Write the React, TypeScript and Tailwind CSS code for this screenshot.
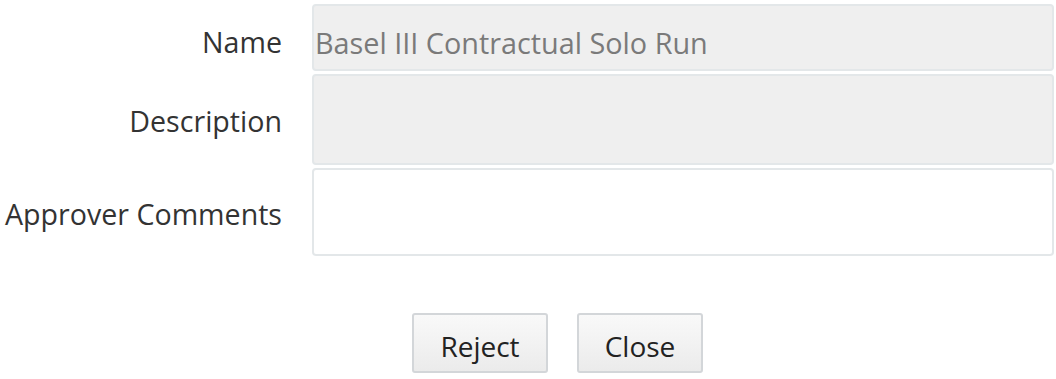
export default function App() {
  const font = { fontFamily: '"Open Sans", "Noto Sans", sans-serif' };
  return (
    <div className="w-[1056px] h-[379px] bg-white overflow-hidden" style={font}>
      <div className="grid grid-cols-[282px_742px] gap-x-[30px] gap-y-[3px] pt-[4px]">
        <div className="flex items-center justify-end text-[28.6px] text-[#333] h-[67px] pt-[10px]">Name</div>
        <div className="h-[67px] rounded-[4px] border-2 border-[#e3e7e9] bg-[#efefef] flex items-center pl-[1px] pt-[10px] text-[28.8px] text-[#7a7a7a]">
          Basel III Contractual Solo Run
        </div>
        <div className="flex items-center justify-end text-[28.6px] text-[#333] h-[91px] pt-[4px]">Description</div>
        <div className="h-[91px] rounded-[4px] border-2 border-[#e3e7e9] bg-[#efefef]"></div>
        <div className="flex items-center justify-end text-[28.6px] text-[#333] h-[88px] pt-[5px]">Approver Comments</div>
        <div className="h-[88px] rounded-[4px] border-2 border-[#e3e7e9] bg-white"></div>
      </div>
      <div className="flex gap-[29px] pl-[412px] pt-[57px]">
        <button className="w-[136px] h-[60px] rounded-[3px] border-2 border-[#d3d6d9] bg-gradient-to-b from-[#f9f9f9] to-[#ebebeb] text-[28px] text-[#222] pt-[5px]">
          Reject
        </button>
        <button className="w-[126px] h-[60px] rounded-[3px] border-2 border-[#d3d6d9] bg-gradient-to-b from-[#f9f9f9] to-[#ebebeb] text-[28px] text-[#222] pt-[5px]">
          Close
        </button>
      </div>
    </div>
  );
}
